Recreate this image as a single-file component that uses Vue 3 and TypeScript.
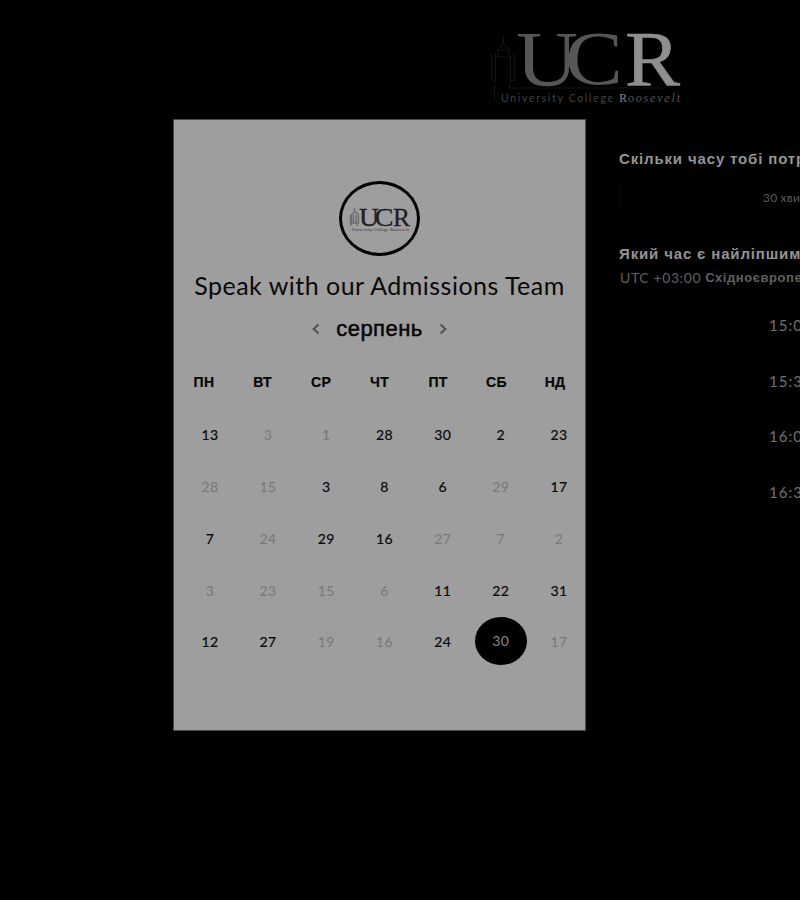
<script setup lang="ts">
interface Day {
  n: number
  state: 'on' | 'off' | 'selected'
}

const weekdays: string[] = ['ПН', 'ВТ', 'СР', 'ЧТ', 'ПТ', 'СБ', 'НД']

// A leading minus marks a day that cannot be booked.
const weeks: number[][] = [
  [13, -3, -1, 28, 30, 2, 23],
  [-28, -15, 3, 8, 6, -29, 17],
  [7, -24, 29, 16, -27, -7, -2],
  [-3, -23, -15, -6, 11, 22, 31],
  [12, 27, -19, -16, 24, 30, -17],
]

const rows: Day[][] = weeks.map((week, w) =>
  week.map((v, d): Day => ({
    n: Math.abs(v),
    state: w === 4 && d === 5 ? 'selected' : v < 0 ? 'off' : 'on',
  })),
)

const slots: string[] = ['15:00', '15:30', '16:00', '16:30']
</script>

<template>
  <div class="page">
    <header class="top">
      <svg class="brand" width="200" height="80" viewBox="0 0 200 80">
        <g fill="none" stroke="#141414" stroke-width="1">
          <path d="M13.5 9v9M13.5 17l-6 7h12zM8 25v6M19 25v6M7 31h13M1.500 28v26l4 2M5.500 28v28M20.500 30v26M24.500 28v26l-4 2M4.500 58v18M19.500 56v6H172" />
        </g>
        <text x="26" y="58.5" class="ucr" font-size="79" fill="#565656" textLength="62" lengthAdjust="spacingAndGlyphs">U</text>
        <text x="75" y="58" class="ucr" font-size="77" fill="#565656" textLength="58" lengthAdjust="spacingAndGlyphs">C</text>
        <text x="135" y="58.5" class="ucr" font-size="79" fill="#8f8f8f" stroke="#8f8f8f" stroke-width="0.6" textLength="55" lengthAdjust="spacingAndGlyphs">R</text>
        <text x="11" y="75.5" class="sub" font-size="10.5" fill="#404040" textLength="112">University College</text>
        <text x="129" y="75.5" class="ucr" font-size="12" fill="#858585">R</text>
        <text x="138" y="75.5" class="ucr" font-size="12" font-style="italic" fill="#555" textLength="52">oosevelt</text>
      </svg>
    </header>

    <main class="body">
      <section class="card">
        <div class="avatar">
          <svg width="62" height="28" viewBox="0 0 62 28">
            <path d="M5.500 3v4l-3 3v8h7v-8l-3-3M1.500 10v8M4.500 10v8M7 10v8M9.500 10v8M2 18v3M8 18v3" fill="none" stroke="#6c6c6c" stroke-width="1.400" />
            <text x="10" y="21" class="ucr" font-size="26" fill="#202020" stroke="#202020" stroke-width="0.3" textLength="20" lengthAdjust="spacingAndGlyphs">U</text>
            <text x="25.500" y="21" class="ucr" font-size="25" fill="#202020" stroke="#202020" stroke-width="0.3" textLength="19" lengthAdjust="spacingAndGlyphs">C</text>
            <text x="44" y="21" class="ucr" font-size="26" fill="#202020" stroke="#202020" stroke-width="0.3" textLength="17" lengthAdjust="spacingAndGlyphs">R</text>
            <text x="3" y="26" class="ucr" font-size="4.500" fill="#333" textLength="57">University College Roosevelt</text>
          </svg>
        </div>
        <h1 class="title">Speak with our Admissions Team</h1>
        <div class="month">
          <svg width="8" height="12" viewBox="0 0 8 12"><path d="M6.500 1.500L1.500 6l5 4.500" /></svg>
          <span class="month-name">серпень</span>
          <svg width="8" height="12" viewBox="0 0 8 12"><path d="M1.500 1.500L6.500 6l-5 4.500" /></svg>
        </div>
        <div class="weekdays">
          <span v-for="w in weekdays" :key="w">{{ w }}</span>
        </div>
        <div class="days">
          <template v-for="(row, r) in rows" :key="r">
            <span v-for="(day, d) in row" :key="d" class="day" :class="day.state">
              <span class="num">{{ day.n }}</span>
            </span>
          </template>
        </div>
      </section>

      <section class="side">
        <h2 class="question">Скільки часу тобі потрібно?</h2>
        <div class="duration">30 хвилин</div>
        <h2 class="question second">Який час є найліпшим?</h2>
        <div class="zone"><span class="utc">UTC +03:00</span><b>Східноєвропейський час</b></div>
        <ul class="slots">
          <li v-for="s in slots" :key="s">{{ s }}</li>
        </ul>
      </section>
    </main>
  </div>
</template>

<style>
body {
  margin: 0;
  background: #000;
}
</style>

<style scoped>
.page {
  box-sizing: border-box;
  width: 800px;
  height: 900px;
  overflow: hidden;
  background: #000;
  font-family: Lato, 'Liberation Sans', sans-serif;
  color: #888;
}
.top {
  box-sizing: border-box;
  height: 119px;
  padding: 26px 0 0 490px;
}
.brand {
  display: block;
}
.ucr {
  font-family: 'Liberation Serif', serif;
}
.sub {
  font-family: Lato, sans-serif;
}
.body {
  display: flex;
  padding-left: 173px;
}
.card {
  box-sizing: border-box;
  flex: none;
  display: flex;
  flex-direction: column;
  align-items: center;
  width: 413px;
  height: 612px;
  padding-top: 61px;
  background: #9e9e9e;
  border: 1px solid #4a4a4a;
}
.avatar {
  box-sizing: border-box;
  flex: none;
  display: flex;
  align-items: center;
  justify-content: center;
  width: 81px;
  height: 75px;
  border: 3px solid #000;
  border-radius: 50%;
}
.title {
  margin: 13px 0 0;
  font-size: 25px;
  line-height: 32px;
  font-weight: 400;
  letter-spacing: 0.48px;
  white-space: nowrap;
  color: #080808;
}
.month {
  display: flex;
  align-items: center;
  gap: 16px;
  height: 30px;
  margin-top: 13px;
}
.month svg {
  fill: none;
  stroke: #4c4c4c;
  stroke-width: 1.8;
}
.month-name {
  font: 22px/30px 'Liberation Sans', sans-serif;
  letter-spacing: 0.45px;
  color: #050505;
  -webkit-text-stroke: 0.5px #050505;
}
.weekdays {
  display: grid;
  grid-template-columns: repeat(7, 58.5px);
  height: 20px;
  margin-top: 28px;
  text-align: center;
  font: bold 14px/20px 'Liberation Sans', sans-serif;
  letter-spacing: 0.3px;
  color: #050505;
  -webkit-text-stroke: 0.2px #050505;
}
.days {
  display: grid;
  grid-template-columns: repeat(7, 58.2px);
  grid-auto-rows: 51.75px;
  margin: 17px 0 0 10px;
}
.day {
  display: flex;
  align-items: center;
  justify-content: center;
  font-size: 14px;
  letter-spacing: 0.4px;
}
.on {
  color: #080808;
  -webkit-text-stroke: 0.2px #080808;
}
.off {
  color: #787878;
}
.selected {
  color: #8a8a8a;
}
.selected .num {
  width: 52px;
  height: 48px;
  margin-bottom: 1px;
  border-radius: 50%;
  background: #000;
  text-align: center;
  line-height: 47px;
}
.side {
  flex: none;
  width: 360px;
  padding: 29px 0 0 33px;
  white-space: nowrap;
}
.question {
  margin: 0;
  font: bold 15px/22px 'Liberation Sans', sans-serif;
  letter-spacing: 0.85px;
  color: #949494;
}
.duration {
  box-sizing: border-box;
  height: 28px;
  margin-top: 14px;
  padding-left: 143px;
  border-left: 1px solid #070707;
  font-size: 12px;
  line-height: 28px;
  letter-spacing: 0.2px;
  color: #5c5c5c;
}
.second {
  margin-top: 31px;
}
.zone {
  display: flex;
  gap: 4px;
  padding-left: 1px;
  margin-top: 2px;
  font-size: 14px;
  line-height: 22px;
  color: #606060;
}
.zone b {
  font: bold 13px/22px 'Liberation Sans', sans-serif;
  letter-spacing: 0.55px;
}
.utc {
  letter-spacing: 0.6px;
}
.slots {
  display: grid;
  grid-auto-rows: 40px;
  gap: 15.6px;
  margin: 16px 0 0 10px;
  padding: 0;
  list-style: none;
}
.slots li {
  box-sizing: border-box;
  padding-left: 139px;
  border-left: 1px solid #050505;
  font-size: 15px;
  line-height: 40px;
  letter-spacing: 1px;
  color: #707070;
}
</style>
